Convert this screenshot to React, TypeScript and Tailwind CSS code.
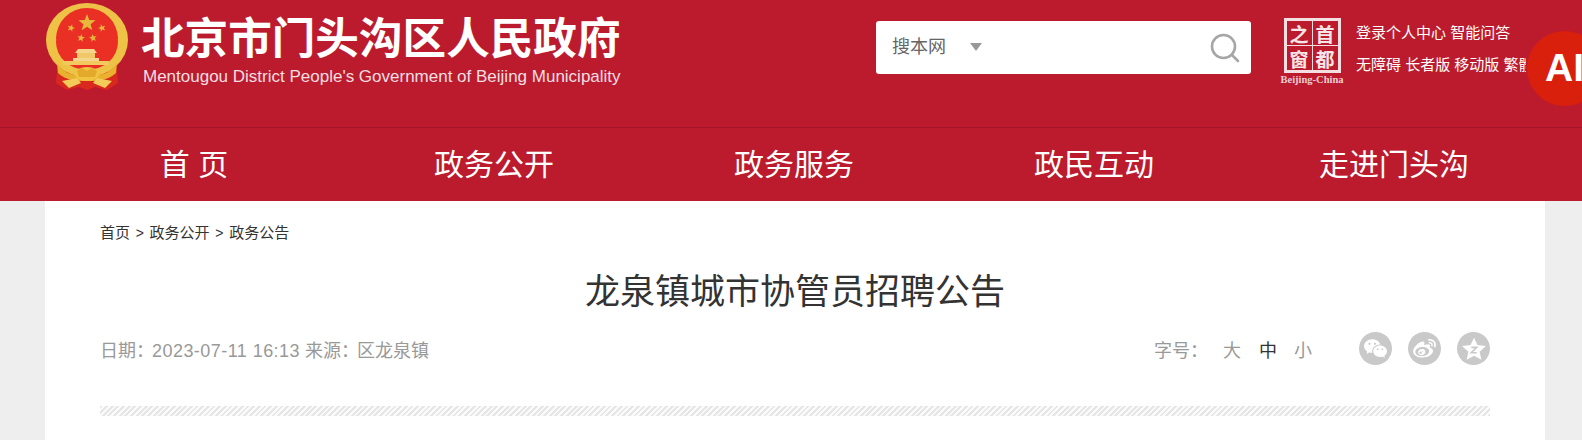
import { RiWechatFill, RiWeiboFill } from 'react-icons/ri';

const NAV = ['首 页', '政务公开', '政务服务', '政民互动', '走进门头沟'];
const CJK = "font-['Liberation_Sans','Noto_Sans_CJK_SC',sans-serif]";

function Star({ x, y, r, rot = 0 }: { x: number; y: number; r: number; rot?: number }) {
  const pts = Array.from({ length: 10 }, (_, i) => {
    const rad = i % 2 === 0 ? r : r * 0.42;
    const a = -Math.PI / 2 + (i * Math.PI) / 5 + rot;
    return `${(x + rad * Math.cos(a)).toFixed(2)},${(y + rad * Math.sin(a)).toFixed(2)}`;
  }).join(' ');
  return <polygon points={pts} fill="#e8b83a" />;
}

function Emblem() {
  return (
    <svg width="84" height="90" viewBox="0 0 84 90" className="shrink-0">
      <path d="M13 58 L11 80 L22 87 L34 84 L42 87 L50 84 L62 87 L73 80 L71 58 Z" fill="#d9291f" />
      <ellipse cx="42" cy="37" rx="41" ry="37" fill="#eec247" />
      <ellipse cx="42" cy="39" rx="31" ry="28" fill="#ea2f25" />
      <path d="M11 36 A31 31 0 0 1 73 36" fill="#ea2f25" />
      <Star x={42} y={20} r={9} />
      <Star x={26} y={25} r={4} rot={0.3} />
      <Star x={57} y={25} r={4} rot={-0.3} />
      <Star x={36} y={35} r={4} rot={0.2} />
      <Star x={48} y={35} r={4} rot={-0.2} />
      <path d="M33 46 H49 L52 50 H30 Z" fill="#f3d58c" />
      <rect x="32" y="50" width="18" height="5" fill="#f0c868" />
      <rect x="28" y="55" width="26" height="3" fill="#f3d58c" />
      <rect x="18" y="58" width="46" height="4" fill="#f2c95e" />
      <path d="M12 60 C20 72 30 73 42 73 C54 73 64 72 72 60 L71 70 C62 78 52 78 42 78 C32 78 22 78 13 70 Z" fill="#e8b22e" />
      <ellipse cx="42" cy="71" rx="12" ry="7" fill="#f0c440" />
      <path d="M32 68 L37 65 L42 68 L47 65 L52 68 L50 74 H34 Z" fill="#e3a92a" />
      <path d="M17 78 L32 75 L36 80 L24 85 Z M67 78 L52 75 L48 80 L60 85 Z" fill="#f2cb58" />
    </svg>
  );
}

function CapitalLogo() {
  return (
    <div className="flex w-[64px] shrink-0 flex-col items-center">
      <div className="grid h-[55px] w-[57px] grid-cols-2 grid-rows-2 gap-[1px] border-[3px] border-[#f3dfe1] bg-[#f3dfe1] text-[19px] leading-none font-bold text-[#f7e6e8] font-['Noto_Sans_CJK_SC',sans-serif]">
        <span className="flex items-center justify-center bg-[#bc1b2e]">之</span>
        <span className="flex items-center justify-center bg-[#bc1b2e]">首</span>
        <span className="flex items-center justify-center bg-[#bc1b2e]">窗</span>
        <span className="flex items-center justify-center bg-[#bc1b2e]">都</span>
      </div>
      <span className="mt-[1px] whitespace-nowrap text-[10.5px] leading-[12px] font-bold text-[#eccdd1] font-['Liberation_Serif',serif]">
        Beijing-China
      </span>
    </div>
  );
}

function Header() {
  return (
    <div className="flex h-[128px] border-b border-[#a3132a] bg-[#bc1b2e]">
      <div className="ml-[45px] mt-[3px] flex items-start">
        <Emblem />
        <div className="ml-[12px] flex w-[490px] flex-col">
          <div className="mt-[6px] whitespace-nowrap text-[43.6px] leading-[52px] font-bold text-white font-['Noto_Sans_CJK_SC',sans-serif]">
            北京市门头沟区人民政府
          </div>
          <div className="mt-[5px] ml-[2px] whitespace-nowrap text-[17px] leading-[22px] text-[#f3dfe1] font-['Liberation_Sans',sans-serif]">
            Mentougou District People's Government of Beijing Municipality
          </div>
        </div>
      </div>
      <div className="ml-[245px] mt-[21px] flex h-[53px] w-[375px] items-center rounded-[3px] bg-white pl-[16px] pr-[11px]">
        <span className={`text-[18px] text-[#666] ${CJK}`}>搜本网</span>
        <span className="ml-[24px] -mt-[2px] h-0 w-0 border-x-[6px] border-t-[8px] border-x-transparent border-t-[#999]" />
        <svg width="30" height="30" viewBox="0 0 30 30" fill="none" stroke="#a6a6a6" strokeWidth="2.6" className="ml-auto">
          <circle cx="13.5" cy="13.5" r="11.5" />
          <path d="M22 22 L28 28" strokeLinecap="round" />
        </svg>
      </div>
      <div className="ml-[29px] mt-[18px] flex items-start">
        <CapitalLogo />
        <div className={`ml-[12px] flex w-[170px] flex-col gap-[13px] overflow-hidden text-[15px] leading-[19px] text-white ${CJK}`}>
          <div className="mt-[5px] whitespace-nowrap">登录个人中心 智能问答</div>
          <div className="whitespace-nowrap">无障碍 长者版 移动版 繁體</div>
        </div>
      </div>
    </div>
  );
}

function Nav() {
  return (
    <div className="h-[73px] bg-[#bc1b2e]">
      <div className={`ml-[44px] grid h-full w-[1500px] grid-cols-5 text-[30px] text-white ${CJK}`}>
        {NAV.map((item) => (
          <a key={item} className="flex items-center justify-center">
            {item}
          </a>
        ))}
      </div>
    </div>
  );
}

function ShareIcon({ children }: { children: React.ReactNode }) {
  return (
    <span className="flex h-[33px] w-[33px] items-center justify-center rounded-full bg-[#c9c9c9] text-white">
      {children}
    </span>
  );
}

function Article() {
  return (
    <div className={`ml-[45px] h-[239px] w-[1500px] bg-white px-[55px] ${CJK}`}>
      <div className="flex items-center gap-[5.7px] pt-[22px] text-[15px] leading-[20px] text-[#333]">
        <span>首页</span>
        <span className="text-[14px]">&gt;</span>
        <span>政务公开</span>
        <span className="text-[14px]">&gt;</span>
        <span>政务公告</span>
      </div>
      <h1 className="mt-[24px] text-center text-[35px] leading-[50px] font-normal text-[#333]">
        龙泉镇城市协管员招聘公告
      </h1>
      <div className="mt-[15px] flex h-[33px] items-center text-[18px] text-[#999]">
        <span className="mt-[6px]">
          日期：<span className="-ml-[2px] tracking-[0.45px]">2023-07-11 16:13</span> 来源：<span className="-ml-[2px]">区龙泉镇</span>
        </span>
        <div className="ml-auto flex items-center">
          <span className="mt-[6px]">字号：</span>
          <span className="ml-[15px] mt-[6px]">大</span>
          <span className="ml-[18px] mt-[6px] text-[#333]">中</span>
          <span className="ml-[17px] mt-[6px]">小</span>
          <div className="ml-[47px] flex gap-[16px]">
            <ShareIcon>
              <RiWechatFill size={25} />
            </ShareIcon>
            <ShareIcon>
              <RiWeiboFill size={25} />
            </ShareIcon>
            <ShareIcon>
              <svg width="26" height="26" viewBox="0 0 24 24">
                <path fill="#fff" d="M12 1.5 L15.2 8.4 L23 9.3 L17.2 14.5 L18.8 22 L12 18.2 L5.2 22 L6.8 14.5 L1 9.3 L8.8 8.4 Z" />
                <path fill="none" stroke="#c9c9c9" strokeWidth="1.5" d="M9.5 10.5 H14.5 L9.5 15.5 H14.5" />
              </svg>
            </ShareIcon>
          </div>
        </div>
      </div>
      <div className="mt-[41px] h-[10px] bg-[repeating-linear-gradient(135deg,#e6e6e6_0px,#e6e6e6_2px,#fbfbfb_2px,#fbfbfb_4px)]" />
    </div>
  );
}

export default function App() {
  return (
    <div className="relative h-[440px] w-[1582px] overflow-hidden bg-[#eeeeee]">
      <Header />
      <Nav />
      <Article />
      <div className="absolute left-[1527px] top-[31px] flex h-[75px] w-[75px] items-center rounded-full bg-[#d9200c] pl-[18px] text-[39px] font-bold text-white font-['Liberation_Sans',sans-serif]">
        AI
      </div>
    </div>
  );
}
